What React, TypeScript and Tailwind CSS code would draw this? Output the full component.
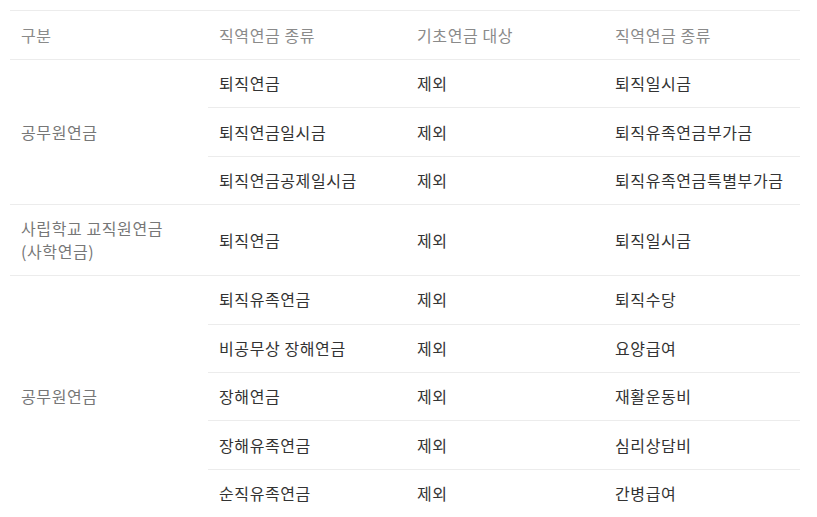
const groups = [
  {
    name: ["공무원연금"],
    rows: [
      ["퇴직연금", "제외", "퇴직일시금"],
      ["퇴직연금일시금", "제외", "퇴직유족연금부가금"],
      ["퇴직연금공제일시금", "제외", "퇴직유족연금특별부가금"],
    ],
  },
  {
    name: ["사립학교 교직원연금", "(사학연금)"],
    rows: [["퇴직연금", "제외", "퇴직일시금"]],
  },
  {
    name: ["공무원연금"],
    rows: [
      ["퇴직유족연금", "제외", "퇴직수당"],
      ["비공무상 장해연금", "제외", "요양급여"],
      ["장해연금", "제외", "재활운동비"],
      ["장해유족연금", "제외", "심리상담비"],
      ["순직유족연금", "제외", "간병급여"],
    ],
  },
];

const App = () => {
  return (
    <main
      className="bg-white min-h-screen pt-[10px] pl-[10px]"
      style={{ fontFamily: '"Noto Sans CJK KR", "Noto Sans", sans-serif' }}
    >
      <table className="w-[790px] table-fixed border-collapse text-[16px] tracking-[0.6px] leading-[23px]">
        <colgroup>
          <col className="w-[198px]" />
          <col className="w-[198px]" />
          <col className="w-[198px]" />
          <col />
        </colgroup>
        <thead>
          <tr className="border-t border-b border-[#ececec] text-[#8a8a8a]">
            <th className="h-[49px] px-[11px] text-left font-normal">구분</th>
            <th className="px-[11px] text-left font-normal">직역연금 종류</th>
            <th className="px-[11px] text-left font-normal">기초연금 대상</th>
            <th className="px-[11px] text-left font-normal">직역연금 종류</th>
          </tr>
        </thead>
        <tbody>
          {groups.map((g, gi) =>
            g.rows.map((r, ri) => (
              <tr key={`${gi}-${ri}`} className="border-b border-[#ececec]">
                {ri === 0 && (
                  <td
                    rowSpan={g.rows.length}
                    className="px-[11px] py-3 text-[#777] align-middle"
                  >
                    {g.name.map((n) => (
                      <div key={n}>{n}</div>
                    ))}
                  </td>
                )}
                <td className="h-[48.4px] px-[11px] py-3 text-[#333]">{r[0]}</td>
                <td className="px-[11px] py-3 text-[#333]">{r[1]}</td>
                <td className="px-[11px] py-3 text-[#333] whitespace-nowrap">{r[2]}</td>
              </tr>
            ))
          )}
        </tbody>
      </table>
    </main>
  );
};

export default App;
